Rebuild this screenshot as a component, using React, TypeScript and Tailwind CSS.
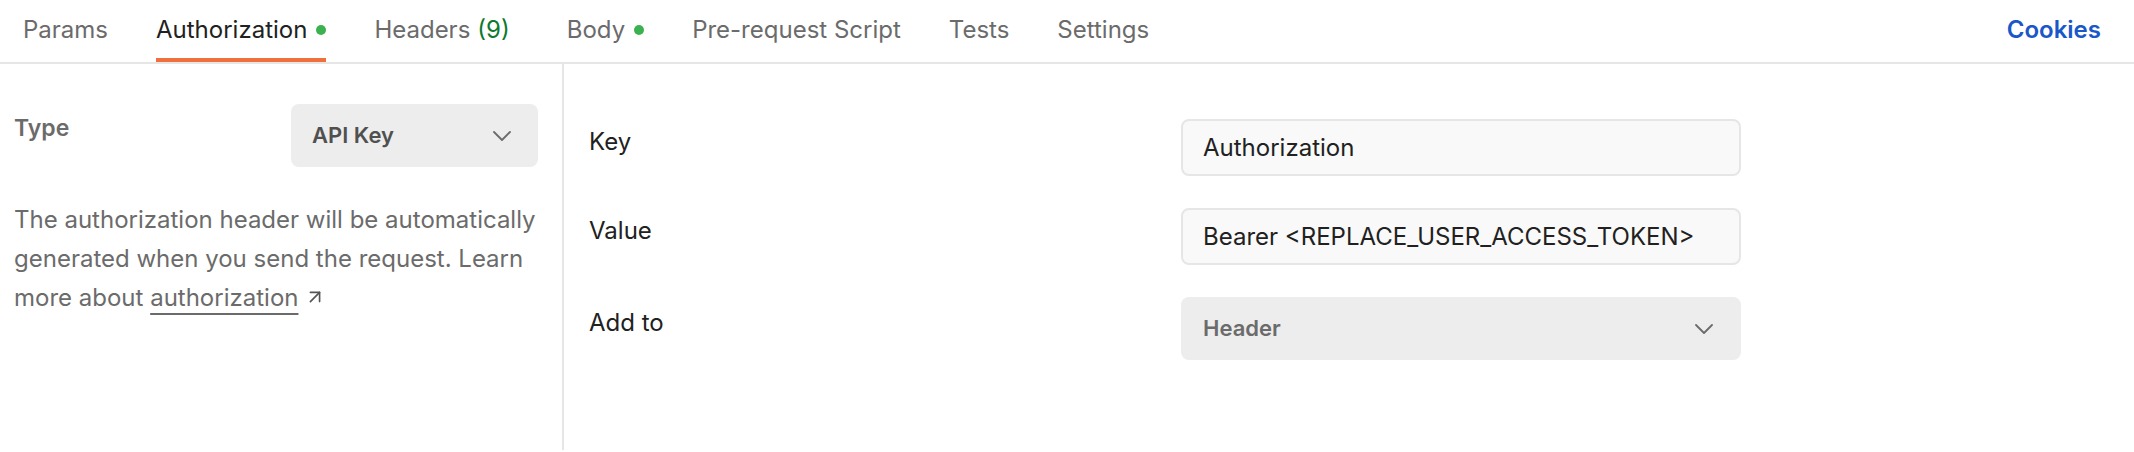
import { ArrowUpRight } from 'lucide-react'

const tabs = [
  { label: 'Params' },
  { label: 'Authorization', active: true, dot: true },
  { label: 'Headers', count: '(9)' },
  { label: 'Body', dot: true },
  { label: 'Pre-request Script' },
  { label: 'Tests' },
  { label: 'Settings' },
]

function Chevron() {
  return (
    <svg width="18" height="10" viewBox="0 0 18 10" fill="none" className="text-[#6b6b6b]">
      <polyline points="1,1 9,9 17,1" stroke="currentColor" strokeWidth="1.8" strokeLinecap="round" strokeLinejoin="round" />
    </svg>
  )
}

function TabBar() {
  return (
    <div className="flex h-[64px] items-stretch justify-between border-b-2 border-[#e6e6e6] pl-[23px] pr-[33px]">
      <div className="flex items-stretch gap-[48px]">
        {tabs.map((tab) => (
          <div
            key={tab.label}
            className={`flex items-center gap-[9px] border-b-[4px] pt-[2px] ${
              tab.active ? 'border-[#f0703d] text-[#212121]' : 'border-transparent text-[#6b6b6b]'
            } ${tab.count ? 'mr-[9px]' : ''}`}
          >
            <span>
              {tab.label}
              {tab.count && <span className="ml-[7px] text-[#0b7a2f]">{tab.count}</span>}
            </span>
            {tab.dot && <span className="h-[10px] w-[10px] rounded-full bg-[#3bb24f]" />}
          </div>
        ))}
      </div>
      <div className="flex items-center pb-[2px] font-semibold text-[#1a57c9]">Cookies</div>
    </div>
  )
}

function Field({ label, children }: { label: string; children: React.ReactNode }) {
  return (
    <div className="flex items-center">
      <div className="w-[592px] -translate-y-[6px] text-[#212121]">{label}</div>
      {children}
    </div>
  )
}

export default function App() {
  return (
    <div className="h-[452px] w-[2134px] bg-white font-['Inter',sans-serif] text-[24px]">
      <TabBar />
      <div className="flex h-[386px]">
        {/* Left: auth type */}
        <div className="w-[564px] shrink-0 border-r-2 border-[#e6e6e6] pl-[14px] pr-[24px] pt-[40px]">
          <div className="flex items-start justify-between">
            <div className="pt-[7px] text-[23px] font-semibold text-[#6b6b6b]">Type</div>
            <div className="flex h-[63px] w-[247px] items-center justify-between rounded-[8px] bg-[#ededed] pl-[21px] pr-[27px] text-[22px] font-semibold text-[#505050]">
              <span>API Key</span>
              <Chevron />
            </div>
          </div>
          <p className="mt-[33px] leading-[39px] text-[#6b6b6b]">
            The authorization header will be automatically generated when you send the request. Learn more
            about{' '}
            <span className="underline decoration-[#6b6b6b] underline-offset-[7px]">authorization</span>
            <ArrowUpRight size={22} strokeWidth={1.8} className="ml-[6px] inline-block align-[-2px] text-[#555]" />
          </p>
        </div>

        {/* Right: key/value */}
        <div className="flex flex-col gap-[32px] pl-[25px] pt-[55px]">
          <Field label="Key">
            <div className="flex h-[57px] w-[560px] items-center rounded-[8px] border-2 border-[#e6e6e6] bg-[#f9f9f9] px-[20px] text-[#212121]">
              Authorization
            </div>
          </Field>
          <Field label="Value">
            <div className="flex h-[57px] w-[560px] items-center rounded-[8px] border-2 border-[#e6e6e6] bg-[#f9f9f9] px-[20px] text-[#212121]">
              Bearer &lt;REPLACE_USER_ACCESS_TOKEN&gt;
            </div>
          </Field>
          <Field label="Add to">
            <div className="flex h-[63px] w-[560px] items-center justify-between rounded-[8px] bg-[#ededed] pl-[22px] pr-[28px] text-[22px] font-semibold text-[#6b6b6b]">
              <span>Header</span>
              <Chevron />
            </div>
          </Field>
        </div>
      </div>
    </div>
  )
}
